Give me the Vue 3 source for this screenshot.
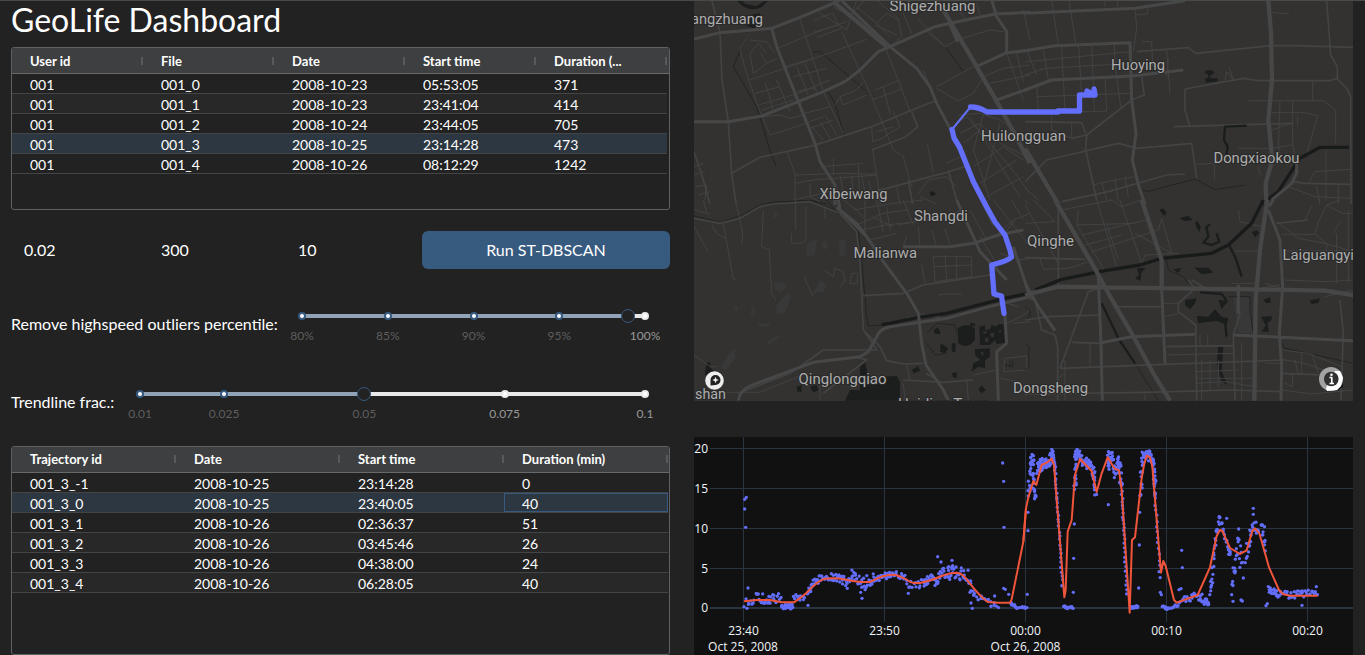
<script setup>
const userColumns = ['User id', 'File', 'Date', 'Start time', 'Duration (...']
const userRows = [
  ['001', '001_0', '2008-10-23', '05:53:05', '371'],
  ['001', '001_1', '2008-10-23', '23:41:04', '414'],
  ['001', '001_2', '2008-10-24', '23:44:05', '705'],
  ['001', '001_3', '2008-10-25', '23:14:28', '473'],
  ['001', '001_4', '2008-10-26', '08:12:29', '1242'],
]
const tripColumns = ['Trajectory id', 'Date', 'Start time', 'Duration (min)']
const tripRows = [
  ['001_3_-1', '2008-10-25', '23:14:28', '0'],
  ['001_3_0', '2008-10-25', '23:40:05', '40'],
  ['001_3_1', '2008-10-26', '02:36:37', '51'],
  ['001_3_2', '2008-10-26', '03:45:46', '26'],
  ['001_3_3', '2008-10-26', '04:38:00', '24'],
  ['001_3_4', '2008-10-26', '06:28:05', '40'],
]
const grids = [
  { id: 'users', columns: userColumns, rows: userRows, selected: 3, focus: -1 },
  { id: 'trips', columns: tripColumns, rows: tripRows, selected: 1, focus: 3 },
]
const sliders = [
  {
    id: 'outliers', label: 'Remove highspeed outliers percentile:', value: 95,
    marks: [[0, '80%'], [25, '85%'], [50, '90%'], [75, '95%'], [100, '100%']],
  },
  {
    id: 'trend', label: 'Trendline frac.:', value: 44.4,
    marks: [[0, '0.01'], [16.67, '0.025'], [44.44, '0.05'], [72.22, '0.075'], [100, '0.1']],
  },
]

const places = [
  ['angzhuang', 691, 23.5, 72], ['Shigezhuang', 889.5, 10.5, 86], ['Huoying', 1111, 70, 54],
  ['Huilongguan', 981, 140.5, 85], ['Dongxiaokou', 1213.5, 162.5, 86], ['Xibeiwang', 819.5, 198.5, 68],
  ['Shangdi', 914, 221, 54], ['Malianwa', 853.5, 257.5, 63.5], ['Qinghe', 1027, 246, 47],
  ['Laiguangying', 1282.5, 259.5, 88], ['Qinglongqiao', 798.5, 384, 88], ['Dongsheng', 1013, 393, 75],
  ['shan', 695, 399, 31], ['Haidian Town', 898, 409, 92],
]

// Each map tile is drawn on its own grid at three units per pixel.
const tiles = [
  {
    at: 'translate(690 0) scale(.33333)',
    wide: 'M760 30L860 200L915 295L965 385L1020 490M430 5L590 140M780 70L805 125',
    major: 'M12 117L90 98L245 85L330 52L425 12L450 0M12 365H115L215 348L325 305L400 275L465 245L510 210L565 155L600 140L735 80L780 70L915 42L1020 37M455 2L600 140L680 205L720 260L740 310L785 395L830 500L890 612M245 85L262 145L325 305L375 430L390 485L435 555V615M860 200L945 160L1020 150M915 42L950 95V160M905 0L918 42M920 300L1020 265',
    mid: 'M125 520L210 472L370 437L545 380L690 320L735 303M65 0L90 98L96 240L115 365L125 520L138 612M12 455L40 540L60 612M545 577L770 517L840 495M775 512L800 600M655 540L668 612M545 450L645 412L683 380L665 335',
    minor: 'M175 100L150 150L170 220L200 310L240 405L305 385L400 350M328 52L370 180L400 275L460 400M383 35L470 90L500 0M370 63L395 50L430 40L445 75L370 97M383 112L455 85M455 95L545 290L610 450L640 470L665 560M525 0L480 48L430 20M530 118L360 180L180 240M262 145L370 100L470 65M545 300L635 267M555 270L630 240M585 140L635 267L660 335M580 262L600 340M545 380L548 425L575 415L630 380L610 335M560 395L610 380M230 160L205 130L180 160L190 220L230 190L262 175M210 155L230 190M180 120L230 125L255 160M225 247L250 330M260 240L300 335M195 280L270 260M205 315L325 280L420 240M310 230L410 205M285 200L370 175M320 200L355 285M345 190L380 275M215 330L310 300M220 350L270 345L300 355L340 345M320 275L360 265L380 268M365 380L400 420M390 365L420 415M405 345L440 405M360 385L430 360M345 340L420 320M435 315L450 290L500 270L520 245M450 290L458 315L530 285M290 455L315 520V612M315 525L460 520L560 523M315 550L370 540L560 525M430 475V525M390 500L520 490M505 495L508 580M450 525L460 580M485 525L490 580M515 525L525 580M535 540L545 580M360 550V590L390 605M548 450L565 560L570 612M310 600L420 575M620 560L630 612M705 90L735 80M683 55L735 110L765 140L800 120L900 90L940 95M765 140L705 90M740 260L850 200M740 265L805 303L850 280L880 230L940 205L1020 195M600 140L635 110L625 55L560 0M560 70L590 40L625 60M555 75L620 105M500 20L560 70L600 110M640 40L665 100M800 20L830 65M860 10L870 45M950 160L1000 300M1000 30L1020 120M980 160L1000 245M900 250L1020 225M735 303L700 210M712 430L730 520M770 490L810 470L830 450M685 580L715 540L770 530L800 560M690 590L740 612M805 345L870 340L930 360L1000 410M800 370L830 350L960 500L1020 580M810 400L870 370L930 430L1010 470M820 430L870 390M850 500L940 440L1000 480M870 550L980 480M890 590L1000 530M840 350L990 590M880 345L850 450L900 600M930 370L880 560M12 500L40 490M12 525L45 515M15 560L50 555L45 600M25 585L60 575',
    water: 'M175 95L130 200L200 320L240 450L258 500M370 155L390 155L460 215L525 270M415 275L435 310L465 415M765 140L820 215M245 612L370 602L410 612',
    areas: 'M140 0Q170 40 215 22L235 0L220 5L200 18L165 12L155 0ZM160 48L210 40V75L190 85L165 75ZM718 578L728 573L738 582L725 590Z',
    parks: '',
  },
  {
    at: 'translate(1025 0) scale(.33333)',
    wide: 'M0 445L100 612M730 0L738 100L741 240L730 360L742 480L722 550L724 612',
    major: 'M0 40L330 25L480 2M0 152L90 137L315 128L320 300L333 400L322 480L340 555L360 612M0 270L80 240L320 228L475 210M740 600L800 550L815 520V490',
    mid: 'M0 545L65 480L280 430L335 445L500 430L515 535M110 605L250 575L425 525L480 522M185 405L320 300L358 285L350 228M185 405L182 450L215 600M140 415L185 405M0 365L170 368L182 400M335 155L490 143L512 160L740 137H815L985 142M480 267L655 235L700 242H915L935 235L965 265L977 290L978 612M480 267V330L495 380M447 380L805 370M905 0L917 165L937 200V235M800 545L845 550L975 553',
    minor: 'M80 0L100 135M132 0L152 130M330 25L335 85L325 155M330 45L368 42V25M240 0V20M278 0V20M0 185L320 155M0 225L60 205L320 190M5 150L35 225M55 150L70 240M110 140L120 335M160 130L170 280M200 130L208 335M268 130L270 190L287 320M35 290L315 280M35 250L40 330M240 230L245 333M100 335H245M350 125H380L383 200M425 150L435 283M430 175L425 230M740 37L792 42M600 240L605 215L625 240L612 200M80 345V390L140 415V370M672 302H895L932 330V430M863 240V300M740 338H840L878 348L845 460L810 500M818 350V375M803 300V430L812 490M765 305L760 440L770 490M640 445H740M700 500L705 525M740 445L800 435M513 493L565 490M568 485V540M740 390L800 370M790 560L870 590L975 595M850 550L870 515L975 508M903 450V600M940 550V612M875 560L885 612M205 555L270 540L330 530M230 545L245 600M270 535L280 605M300 530L310 590M0 565L40 600M0 600L10 612',
    water: 'M350 570L370 574L510 537L568 569L660 555',
    areas: 'M538 217Q553 203 568 217Q562 227 556 225V235L578 235V244L543 248L540 235H550V225Z',
    parks: '',
    river: 'M972 442H885L825 475L795 520L760 575L710 612',
    stream: 'M665 377L600 380L597 420L608 440L605 462',
  },
  {
    at: 'translate(690 200) scale(.33333)',
    wide: '',
    major: 'M445 0L450 30L530 110L580 185L650 280L685 340L695 430L708 495L760 570L775 602M145 602Q150 565 200 550L370 487L510 470L535 455L560 410Q570 385 600 380L770 355L890 322L1020 290M640 140H780L850 130L925 105L1000 90M800 0L850 110L870 155L950 240M945 345L950 430L920 455L925 602M440 22L500 70L530 110M970 140L1020 290',
    mid: 'M12 55L90 70L150 55L210 20L250 12L360 5L450 40L500 95L510 180L520 390L550 420L570 440L590 482L640 492L700 490M145 580L300 520L400 450L500 450L560 450L545 425L520 390M500 470L530 480L490 510L400 580M518 287L640 280L700 255L900 225M650 355L700 345L750 352M640 540L760 547L850 540M708 520L750 545',
    minor: 'M220 30L215 140L238 150L245 280L258 300M317 0V90M348 20V120L335 130H305V100M100 70L130 238H140M12 80L55 155M65 75L80 100L105 115M137 0L158 100L155 135M12 30L60 42M40 0L50 35M345 230L350 250L370 290M405 20V55M405 212L430 230L435 205L460 215L465 240L452 260M480 250L485 220H502V250ZM500 75L580 40L650 30M490 30L610 10L700 0M510 90L590 75L720 60M540 120L620 100M460 0L500 30L525 60M525 0V95M560 0L580 95M590 20L600 90M640 0L670 75M545 50L610 80M625 75L760 50L820 30M730 170H845V230L735 245ZM765 165L770 240M800 170V235M730 200L845 195M640 140L650 110M685 80L690 140M725 90L740 140M765 85L780 135M695 195L705 250M745 285L760 282H815M12 465L60 500H80M80 577H210L350 520M650 495L660 540M900 225L920 300L985 320M840 30L890 120M880 20L910 80M910 0L1020 140M925 100L970 60L1020 40M950 130L985 180L1020 175M930 160L990 180M970 370L1020 365M945 475L1010 468V510L940 515ZM1010 590L985 545L930 535M850 525L920 510M830 535L835 602M640 550L645 602M390 550V602M965 0L1000 60M975 60L940 105M870 110L920 190M950 370Q1000 350 1020 330',
    water: 'M12 48L90 67L150 48L215 13L250 6L360 1L440 33L505 94L515 180L530 350L535 378L575 375M410 0L445 45M710 400L740 370L795 375L800 400M710 430L735 465L770 460M948 490V500M960 482V503M968 480V500M948 497H968',
    areas: 'M803 385Q830 365 855 385V420Q830 450 805 430ZM868 380L885 376V390L900 388L905 374L918 380L925 373H940L945 428L920 432L915 420L900 435H870ZM855 448L900 445V470L885 480L885 505L865 500L845 515L850 490L870 480L855 465ZM752 430L775 445L765 460L750 455ZM785 430H797V455H785ZM730 390L745 382L752 402L735 402ZM665 510L685 498L690 512L672 520ZM785 520L800 515V535L790 532ZM865 568L875 556L887 570L875 580ZM510 500L525 485L535 530L560 545L570 530L620 528L630 545V602H465L480 570L510 570ZM320 560L335 555V575L322 575ZM360 560L380 555L385 570L370 578ZM45 515L50 490L60 485L62 505L80 520L45 525ZM840 368L855 370V378L842 378Z',
    parks: 'M350 130L380 115L375 165L350 170ZM395 130L410 120L412 145L400 150ZM445 125L465 115V165L450 170ZM250 40H262V53H250ZM252 245L275 245L290 260L270 278L255 270ZM390 240L412 255L400 275L370 280ZM258 320L275 295L300 275L302 295L285 340L260 345ZM185 320H195V345H182ZM130 315L145 320L140 340ZM205 370H240L235 380H205ZM230 425L265 403L270 412L235 435ZM122 455L135 445V475L110 510L90 505Z',
    holes: 'M880 395L890 392V400L880 402ZM900 400L912 398V412L903 410ZM925 390L935 392L930 400ZM885 415L895 412V425H885ZM870 458L880 455V468ZM510 560L530 595',
    river: 'M575 374L600 370L680 353L770 340L850 319L940 296L1020 279',
  },
  {
    at: 'translate(1025 200) scale(.33333)',
    wide: 'M90 0L215 215L250 280L320 400L385 520L435 602M350 0L410 180V265M727 0L705 150L692 300L688 602M0 285L100 260L240 262L695 268L900 272L985 285',
    major: 'M730 30L765 120L773 260L763 400L770 500L768 602M220 230L228 430L232 602M410 265L420 490M228 428L320 410L510 403M625 405L985 422M0 250L40 320L90 392M732 20L745 0M640 255V340',
    mid: 'M100 0V260M0 173L180 178M0 360L70 350L227 345M105 505L420 493L780 480M105 505L190 275L220 265M265 320H410M425 440L625 437M512 375L515 602M640 330L645 340L625 405L630 602M512 375L460 335V310L510 265L490 240M550 270L500 240M0 582L360 577L620 570L770 575M770 520L900 525M755 70L850 60M945 300L955 400L948 602M0 290L30 300L50 390L90 405L98 440V602M140 427L228 430',
    minor: 'M0 15L100 190M25 0L90 65L0 70M45 175L55 208L130 205L205 180M160 30L155 75L220 180L240 215M110 30L260 0L290 20L350 0M155 75L330 70M170 105L365 60M180 135L290 105M200 155L400 90L410 55L440 160M285 0L350 190M215 0L275 200M245 70L280 180M330 100L440 160M350 190L360 165L460 160M630 153H705M770 153H985M755 65L820 115L900 130M770 103H870M840 60L860 20M880 65L870 103L905 130V180M880 65L905 15L945 0M905 15L950 40H985M925 100L945 65M900 130L985 155M935 100V250M970 30V250M420 350L460 340M415 310H460M525 405V440M548 405V440M425 465L625 460M515 515L640 510M515 535H690M530 480V602M555 480V570M580 480V560M650 430V602M195 430V500M120 480V602M98 535L120 520M515 550L600 545L690 560M770 450L850 460L950 500M830 460V525M860 460L880 520M810 480L820 525M780 480L840 490L910 515M803 520V560L780 550M720 250L770 265M705 265L765 255M900 290L985 270M720 490L770 490M770 570L860 582L985 570M360 580V602M620 250H700M640 30L645 65L710 80M780 240L900 245L985 240',
    water: 'M0 320L15 330V350L0 360M0 430L12 440V500L0 510M330 490L400 602M425 180L430 210L475 230L490 250M610 290H675V330L685 400M770 430L780 445L985 490',
    areas: 'M403 30L415 25L425 40L418 48ZM463 55L490 47L503 60L480 63ZM510 63L525 75V97L515 85ZM335 205L362 203L348 220L347 243L330 235L342 225ZM445 208L470 203L460 220ZM508 203H550L565 218L530 223ZM680 97L695 90L703 100L690 112ZM480 300L515 295L510 310L495 328L480 315ZM515 348L550 350L570 328L590 350L610 355L605 375L575 362L520 370ZM580 300L610 303L595 320L590 328ZM715 300L735 292L738 308L725 310ZM708 350L740 348V360L728 368V375L732 395H710L722 375ZM853 302L885 295L880 308L860 312ZM580 440H595L590 515L608 555L590 545L575 490Z',
    parks: 'M625 290H675L685 400H640Z',
    river: 'M30 270L110 238L240 212L345 195L410 175L560 160L610 135L680 70L715 0',
    stream: 'M612 135L632 175L650 230M525 277L590 282L605 302M600 365L605 410M230 310L280 415L330 490M540 85L555 73M545 85L550 110L535 128L560 135L583 125L575 100M525 85L515 65',
  },
]

const yTicks = [[20, 448.5], [15, 488.5], [10, 528.5], [5, 568.5], [0, 608]]
const xTicks = [['23:40', 743.5], ['23:50', 884.5], ['00:00', 1025.5], ['00:10', 1166.5], ['00:20', 1307.5]]

let seed = 17
const random = () => {
  seed = (seed * 16807) % 2147483647
  return seed / 2147483647 - 0.5
}
const dots = []
// Spread n samples evenly along a polyline, with jitter across it.
function cloud(ox, line, n, jx, jy) {
  for (let i = 0; i < n; i++) {
    const t = (i / (n - 1)) * (line.length - 1)
    const k = Math.min(Math.floor(t), line.length - 2)
    const f = t - k
    const x = line[k][0] + (line[k + 1][0] - line[k][0]) * f + random() * jx
    const y = line[k][1] + (line[k + 1][1] - line[k][1]) * f + random() * jy
    dots.push([ox + x / 3, 430 + Math.max(y, 58) / 3])
  }
}
const single = (ox, list) => list.forEach(([x, y]) => dots.push([ox + x / 3, 430 + y / 3]))

cloud(690, [[170, 515], [210, 502], [240, 510], [272, 505]], 32, 4, 32)
cloud(690, [[274, 530], [308, 530]], 22, 4, 15)
cloud(690, [[312, 500], [345, 512]], 12, 4, 22)
cloud(690, [[352, 490], [370, 460], [400, 440], [430, 442], [458, 448]], 48, 4, 22)
cloud(690, [[458, 458], [485, 440], [505, 455], [530, 460], [550, 445]], 40, 4, 45)
cloud(690, [[550, 443], [580, 440], [605, 430], [648, 445]], 44, 4, 20)
cloud(690, [[652, 468], [700, 460], [725, 445], [742, 460]], 38, 4, 26)
cloud(690, [[745, 438], [790, 425], [835, 435]], 42, 4, 42)
cloud(690, [[838, 455], [855, 498], [890, 515], [925, 528]], 22, 5, 20)
cloud(690, [[962, 520], [980, 532], [1010, 533]], 18, 3, 6)
cloud(1025, [[10, 190], [15, 100], [24, 75], [25, 160], [33, 205]], 42, 8, 32)
cloud(1025, [[38, 120], [50, 100], [65, 105], [78, 72], [90, 110]], 70, 9, 36)
cloud(1025, [[90, 110], [100, 270], [112, 465]], 30, 4, 8)
cloud(1025, [[115, 527], [125, 533], [145, 532]], 13, 3, 7)
cloud(1025, [[150, 180], [153, 64], [175, 95], [203, 110], [211, 188]], 72, 8, 30)
cloud(1025, [[248, 105], [255, 65], [270, 130], [282, 90], [290, 170]], 64, 9, 34)
cloud(1025, [[290, 170], [297, 315], [305, 490]], 27, 4, 6)
cloud(1025, [[315, 532], [340, 530]], 14, 3, 7)
cloud(1025, [[345, 200], [353, 70], [370, 75], [385, 100], [390, 190]], 65, 8, 30)
cloud(1025, [[390, 190], [398, 315], [405, 440]], 16, 4, 6)
cloud(1025, [[412, 530], [425, 535], [460, 526]], 24, 3, 7)
cloud(1025, [[462, 522], [500, 498], [525, 500], [542, 515], [552, 532]], 38, 4, 24)
cloud(1025, [[555, 495], [565, 390], [575, 300], [585, 260], [605, 340], [618, 380]], 46, 6, 26)
cloud(1025, [[620, 470], [630, 410], [640, 310], [648, 400], [670, 350]], 28, 8, 60)
cloud(1025, [[670, 365], [678, 290], [695, 290], [715, 305], [720, 360]], 34, 7, 38)
cloud(1025, [[730, 482], [765, 495], [820, 495], [878, 490]], 56, 4, 25)
single(690, [[164, 208], [169, 202], [164, 237], [167, 292], [174, 474], [162, 530], [171, 535], [354, 526], [655, 490], [472, 475], [512, 487], [516, 505], [743, 380], [753, 396], [786, 391], [788, 407], [776, 410], [840, 487], [843, 519], [847, 535], [914, 498], [938, 99], [941, 154], [942, 292], [941, 475], [946, 478], [956, 493], [1012, 493]])
single(1025, [[9, 302], [9, 247], [148, 282], [146, 385], [145, 487], [250, 224], [344, 247], [343, 345], [341, 474], [406, 487], [409, 494], [470, 361], [472, 413], [462, 479], [468, 476], [563, 458], [605, 265], [685, 235], [685, 253], [620, 494], [624, 514], [648, 510], [652, 513], [655, 444], [723, 527], [727, 521], [831, 526], [874, 470]])
</script>

<template>
  <main class="page">
    <section class="left">
      <h1>GeoLife Dashboard</h1>

      <div v-for="(grid, g) in grids" :key="grid.id" class="grid" :class="[grid.id, g === 0 ? 'first' : 'last']">
        <div class="head">
          <div v-for="column in grid.columns" :key="column" class="cell">{{ column }}</div>
        </div>
        <div v-for="(row, r) in grid.rows" :key="r" class="row" :class="{ selected: r === grid.selected }">
          <div v-for="(value, c) in row" :key="c" class="cell" :class="{ focus: r === grid.selected && c === grid.focus }">{{ value }}</div>
        </div>
      </div>

      <div class="params">
        <span>0.02</span><span>300</span><span>10</span>
        <button>Run ST-DBSCAN</button>
      </div>

      <div class="sliders">
        <div v-for="slider in sliders" :key="slider.id" class="control" :class="slider.id">
          <label>{{ slider.label }}</label>
          <div class="slider">
            <div class="fill" :style="{ width: slider.value + '%' }"></div>
            <template v-for="[pos, text] in slider.marks" :key="text">
              <i class="dot" :class="{ active: pos <= slider.value + 0.1 }" :style="{ left: pos + '%' }"></i>
              <span class="mark" :class="{ active: pos <= slider.value + 0.1 }" :style="{ left: pos + '%' }">{{ text }}</span>
            </template>
            <b class="handle" :style="{ left: slider.value + '%' }"></b>
          </div>
        </div>
      </div>
    </section>

    <section class="right">
      <svg class="map" viewBox="694 1 659 400">
        <rect x="694" y="1" width="659" height="400" fill="#333231" />
        <g v-for="tile in tiles" :key="tile.at" :transform="tile.at">
          <path class="park" :d="tile.parks" />
          <path class="area" :d="tile.areas" />
          <path v-if="tile.holes" class="hole" :d="tile.holes" />
          <path class="water" :d="tile.water" />
          <path class="minor" :d="tile.minor" />
          <path class="mid" :d="tile.mid" />
          <path v-if="tile.river" class="river" :d="tile.river" />
          <path v-if="tile.stream" class="stream" :d="tile.stream" />
          <path class="major" :d="tile.major" />
          <path class="wide" :d="tile.wide" />
        </g>
        <text v-for="[name, x, y, w] in places" :key="name" class="place" :x="x" :y="y" :textLength="w" lengthAdjust="spacingAndGlyphs">{{ name }}</text>
        <path class="route thin" d="M970.5 107L952 129.500" />
        <path class="route" d="M952 129.500L954 138L959.500 147L973.500 182L985 204L995 222L1005 235L1010 250L1011.500 257Q1008 261 991.700 265L994 294L1001.500 296L1004 313.500" />
        <path class="route" d="M970.500 107Q979 107 987 112L1058 112V111H1079.500V95H1095L1094 89V95L1087 91V95" />
        <circle cx="714.500" cy="380.500" r="9.300" fill="#eee" />
        <path d="M710.500 385.500V380A5 5 0 1 1 715.500 385Z" fill="#222" />
        <path d="M715.500 376.800L716.400 379L718.700 380L716.400 381L715.500 383.200L714.600 381L712.300 380L714.600 379Z" fill="#eee" />
        <path d="M1331 384H1343V387L1340 389L1332 391Z" fill="#161616" />
        <circle cx="1331" cy="379" r="12" fill="#a2a2a2" />
        <path d="M1335 371H1340L1343 378L1341 386L1337 390L1327 391L1326 388Z" fill="#fff" />
        <circle cx="1331.300" cy="379" r="7.300" fill="#303030" />
        <path d="M1329.500 377.500H1331.800V383.500M1329.500 383.500H1334" fill="none" stroke="#fff" stroke-width="1.700" />
        <circle cx="1331.500" cy="374.800" r="1.300" fill="#fff" />
      </svg>

      <svg class="chart" viewBox="694 437 659 218">
        <rect x="694" y="437" width="659" height="218" fill="#111" />
        <g class="gridlines">
          <path v-for="[label, x] in xTicks" :key="label" :d="`M${x} 437V622`" />
          <path v-for="[label, y] in yTicks" :key="label" :d="`M710 ${y}H1353`" :stroke-width="label === 0 ? 2 : 1" />
        </g>
        <g class="ticks">
          <text v-for="[label, y] in yTicks" :key="label" text-anchor="end" x="708" :y="y + 4">{{ label }}</text>
          <text v-for="[label, x] in xTicks" :key="label" text-anchor="middle" :x="x" y="635">{{ label }}</text>
          <text text-anchor="middle" x="743" y="651">Oct 25, 2008</text>
          <text text-anchor="middle" x="1025.500" y="651">Oct 26, 2008</text>
        </g>
        <circle v-for="([x, y], i) in dots" :key="i" :cx="x" :cy="y" r="1.650" fill="#636efa" />
        <g class="line">
          <path transform="translate(690 430) scale(.33333)" d="M162 514L200 510L240 510L275 517H312Q330 505 350 488Q385 450 405 446Q435 443 470 449Q500 457 540 456Q580 434 605 434Q625 434 650 449Q665 461 690 459Q725 452 755 438Q780 428 800 428Q820 430 835 455Q870 500 893 516L925 518H960L965 508L1000 335L1008 235" />
          <path transform="translate(1025 430) scale(.33333)" d="M-5 335L3 235L10 202L25 153L34 165L50 105L65 98L80 86L87 105L118 502L122 480L128 305L140 270L150 135L165 87L200 123L215 186L230 130L248 82L268 115L282 121L290 180L314 548L321 330L330 322L350 145L357 105L365 77L375 82L382 110L408 428L415 393L422 408L447 510L455 518L518 495L555 412L575 318L585 300L592 303L615 354L645 372L665 361L682 303L690 295L703 310L732 412L762 480L775 493L795 497H878" />
        </g>
      </svg>
    </section>
  </main>
</template>

<style>
html, body { background: #222; overflow: hidden; }
</style>

<style scoped>
.page { display: flex; box-sizing: border-box; width: 1365px; height: 655px; overflow: hidden; border-top: 1px solid #494b4a; background: #222; color: #fff; font-family: Lato, sans-serif; font-size: 16px; }
.left { display: flex; flex-direction: column; width: 659px; margin-left: 11px; flex: none; }
h1 { flex: none; margin: 0; height: 46px; font-size: 32px; font-weight: 400; line-height: 38px; }
.grid { flex: none; box-sizing: border-box; border: 1px solid #5f6163; border-radius: 3px; font-size: 14px; overflow: hidden; }
.first { height: 163px; }
.last { order: 3; height: 209px; }
.head { display: flex; height: 25px; background: #3d3f41; border-bottom: 1px solid #68696b; font-size: 13px; font-weight: 700; line-height: 26px; }
.trips .head { line-height: 25px; }
.cell { box-sizing: border-box; width: 131px; padding-left: 18px; white-space: nowrap; flex: none; }
.trips .cell { width: 164px; }
.head .cell { position: relative; }
.head .cell::after { content: ""; position: absolute; right: 0; top: 9px; width: 2px; height: 8px; background: #57595b; }
.trips .head .cell::after { top: 8px; }
.row { display: flex; box-sizing: border-box; width: 655px; height: 20px; border-bottom: 1px solid #434446; line-height: 22px; }
.trips .row { width: 656px; }
.row:nth-child(odd) { background: #282828; }
.row.selected { background: #2d3741; }
.row .focus { box-shadow: inset 0 0 0 1px #375a7f; }
.params { order: 1; display: flex; flex: none; height: 38px; margin-top: 21px; line-height: 38px; }
.params span { box-sizing: border-box; width: 137px; padding-left: 13px; }
.params button { width: 248px; margin-left: auto; padding: 0; border: 0; border-radius: 6px; background: #375a7f; color: #fff; font: inherit; }
.sliders { order: 2; flex: none; height: 177px; }
.control { display: flex; justify-content: space-between; height: 33px; padding: 45px 25px 0 0; }
label { margin-top: -2px; line-height: 24px; white-space: nowrap; }
.slider { position: relative; height: 4px; background: #e9e9e9; }
.outliers .slider { width: 343px; }
.trend .slider { width: 505px; }
.fill { height: 4px; background: #91a3b7; }
.dot { position: absolute; top: -2px; box-sizing: border-box; width: 8px; height: 8px; margin-left: -4px; border: 2px solid #e9e9e9; border-radius: 50%; background: #fff; }
.dot.active { border-color: #375a7f; }
.mark { position: absolute; top: 14px; transform: translateX(-50%); color: #999; font-size: 12px; line-height: 15px; }
.mark.active { color: #5e5e5e; }
.handle { position: absolute; top: -5px; box-sizing: border-box; width: 14px; height: 14px; margin-left: -7px; border: 1px solid #375a7f; border-radius: 50%; background: #222; }
.right { display: flex; flex-direction: column; gap: 36px; width: 659px; margin-left: 24px; flex: none; }
.map { display: block; width: 659px; height: 400px; flex: none; }
.chart { display: block; width: 659px; height: 218px; flex: none; }
.map path { stroke-linejoin: round; }
.minor, .mid, .major, .wide, .river, .stream, .water { fill: none; stroke: #434343; }
.minor { stroke-width: 3; stroke: #424242; }
.mid { stroke-width: 5; }
.major { stroke-width: 9; stroke: #474747; }
.wide { stroke-width: 13; stroke: #474747; }
.water { stroke-width: 3; stroke: #222422; }
.river { stroke-width: 10; stroke: #191b1a; }
.stream { stroke-width: 7; stroke: #1b1d1c; }
.area { fill: #1c1e1d; }
.hole { fill: #333231; }
.park { fill: #3b3c3a; opacity: .65; }
.place { font: 14.5px Roboto, sans-serif; fill: #adadad; stroke: #292929; stroke-width: 2px; paint-order: stroke; stroke-linejoin: round; }
.route { fill: none; stroke: #636efa; stroke-width: 5.300; stroke-linecap: round; }
.route.thin { stroke-width: 2; }
.gridlines path { stroke: #283442; }
.ticks { font: 12px "Open Sans", sans-serif; fill: #f2f5fa; }
.line path { fill: none; stroke: #ef553b; stroke-width: 6; stroke-linejoin: round; }
</style>
